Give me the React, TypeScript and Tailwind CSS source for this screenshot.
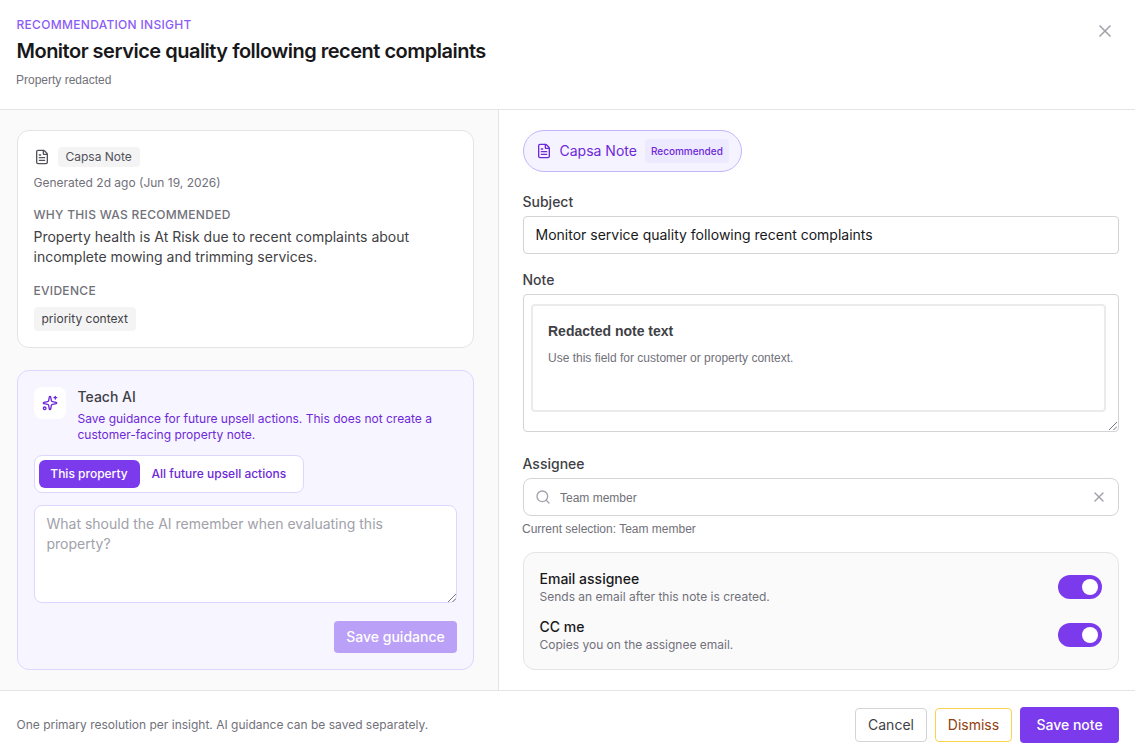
import { FileText, Search, Sparkles, X } from "lucide-react";

const ARIAL = "font-['Liberation_Sans',Arial,sans-serif]";

function FieldLabel({ htmlFor, children }: { htmlFor: string; children: string }) {
  return (
    <label htmlFor={htmlFor} className="block h-5 text-sm leading-5 font-medium text-[#3f3f46]">
      {children}
    </label>
  );
}

function ResizeGrip() {
  return (
    <svg className="absolute right-px bottom-px size-2" viewBox="0 0 8 8" fill="none" stroke="#66666c" strokeWidth="0.9">
      <path d="M0 8 8 0M4.5 8 8 4.5" />
    </svg>
  );
}

function ToggleRow({ title, hint }: { title: string; hint: string }) {
  return (
    <div className="flex h-9 items-center justify-between">
      <div>
        <p className="text-sm leading-5 font-medium text-[#18181b]">{title}</p>
        <p className="text-xs leading-4 text-[#71717a]">{hint}</p>
      </div>
      <button
        role="switch"
        aria-checked="true"
        aria-label={title}
        className="flex h-6 w-11 items-center justify-end rounded-full bg-[#7c3aed] p-1"
      >
        <span className="size-4 rounded-full bg-white" />
      </button>
    </div>
  );
}

function Header() {
  return (
    <header className="flex h-[110px] shrink-0 justify-between border-b border-[#e4e4e7] pt-[17px] pr-[21px] pl-[16.5px]">
      <div>
        <p className="text-xs leading-4 font-medium tracking-[0.3px] text-[#8b5cf6]">RECOMMENDATION INSIGHT</p>
        <h1 className="mt-1 text-xl leading-7 font-semibold tracking-tight text-[#18181b]">
          Monitor service quality following recent complaints
        </h1>
        <p className={`mt-[7px] -ml-[0.5px] text-xs leading-4 text-[#71717a] ${ARIAL}`}>Property redacted</p>
      </div>
      <button aria-label="Close" className="mt-[5px] flex size-[18px] items-center justify-center text-[#a1a1aa]">
        <X className="size-5 shrink-0" strokeWidth={2} />
      </button>
    </header>
  );
}

function RecommendationCard() {
  return (
    <section className="h-[218px] rounded-xl border border-[#e4e4e7] bg-white p-4 text-[#3f3f46]">
      <div className="flex h-5 items-center gap-2">
        <FileText className="size-4 text-[#52525b]" strokeWidth={2} />
        <span className="rounded bg-[#f4f4f5] px-2 text-xs leading-5 text-[#52525b]">Capsa Note</span>
      </div>
      <p className="mt-2 text-xs leading-4 text-[#71717a]">Generated 2d ago (Jun 19, 2026)</p>
      <h2 className="mt-4 text-xs leading-4 font-medium tracking-[0.3px] text-[#71717a]">WHY THIS WAS RECOMMENDED</h2>
      <p className="mt-1 text-sm leading-5">
        Property health is At Risk due to recent complaints about incomplete mowing and trimming services.
      </p>
      <h2 className="mt-4 text-xs leading-4 font-medium tracking-[0.3px] text-[#71717a]">EVIDENCE</h2>
      <span className="mt-2 inline-block rounded bg-[#f4f4f5] px-2 text-xs leading-6">priority context</span>
    </section>
  );
}

function TeachCard() {
  return (
    <section className="mt-[22px] h-[300px] rounded-xl border border-[#ddd6fe] bg-[#f7f5ff] p-4">
      <div className="flex gap-3">
        <div className="flex size-8 shrink-0 items-center justify-center rounded-lg bg-white text-[#6d28d9]">
          <Sparkles className="size-4" strokeWidth={2} />
        </div>
        <div>
          <h2 className="text-sm leading-5 font-medium text-[#3f3f46]">Teach AI</h2>
          <p className="mt-1 text-xs leading-4 text-[#6d28d9]">
            Save guidance for future upsell actions. This does not create a customer-facing property note.
          </p>
        </div>
      </div>
      <div className="mt-3 flex h-[38px] w-[270px] rounded-lg border border-[#ddd6fe] bg-white p-1 text-xs font-medium">
        <button className="h-7 w-[101px] shrink-0 rounded-md bg-[#7c3aed] text-white">This property</button>
        <button className="h-7 shrink-0 pl-3 whitespace-nowrap text-[#6d28d9]">All future upsell actions</button>
      </div>
      <div className="relative mt-3 h-[98px]">
        <textarea
          aria-label="Guidance"
          className="block h-full w-full resize-none rounded-lg border border-[#ddd6fe] bg-white px-3 py-2 text-sm leading-5 placeholder:text-[#a1a1aa]"
          placeholder="What should the AI remember when evaluating this property?"
        />
        <ResizeGrip />
      </div>
      <div className="mt-[18px] flex justify-end">
        <button className="h-8 w-[123px] rounded bg-[#bba0f7] pl-px text-sm font-medium text-white">Save guidance</button>
      </div>
    </section>
  );
}

function NoteForm() {
  return (
    <main className="flex-1 bg-white pt-5 pr-4 pl-[23.5px]">
      <div className="flex h-[42px] w-[219px] items-center rounded-full border border-[#c4b5fd] bg-[#f5f3ff] pl-3 text-[#6d28d9]">
        <FileText className="size-4" strokeWidth={2} />
        <span className="ml-2 text-sm">Capsa Note</span>
        <span className="ml-2 h-6 w-[84px] rounded bg-[#ede9fe] text-center text-[10px] leading-6 font-medium">
          Recommended
        </span>
      </div>

      <div className="mt-5">
        <FieldLabel htmlFor="subject">Subject</FieldLabel>
        <input
          id="subject"
          className="mt-1 block h-[38px] w-full rounded border border-[#d4d4d8] px-3 pb-0.5 text-sm text-[#18181b]"
          defaultValue="Monitor service quality following recent complaints"
        />
      </div>

      <div className="mt-4">
        <FieldLabel htmlFor="note">Note</FieldLabel>
        <div id="note" className="relative mt-1 h-[138px] rounded border border-[#d4d4d8] pt-[9px] pr-3 pl-[7.5px]">
          <div className={`h-[108px] rounded border-2 border-[#ebebec] px-[15px] pt-[17px] ${ARIAL}`}>
            <p className="text-sm leading-4 font-bold text-[#3f3f46]">Redacted note text</p>
            <p className="mt-[11px] text-xs leading-4 text-[#71717a]">
              Use this field for customer or property context.
            </p>
          </div>
          <ResizeGrip />
        </div>
      </div>

      <div className="mt-[22px]">
        <FieldLabel htmlFor="assignee">Assignee</FieldLabel>
        <div className="mt-1 flex h-[38px] items-center rounded-lg border border-[#d4d4d8] pr-[13px] pl-[11.5px] text-[#a1a1aa]">
          <Search className="size-4" strokeWidth={2} />
          <span id="assignee" className={`ml-[9px] flex-1 pt-0.5 text-xs text-[#71717a] ${ARIAL}`}>
            Team member
          </span>
          <X className="-mr-0.5 size-4" strokeWidth={2} />
        </div>
        <p className={`mt-[5px] -ml-[0.5px] text-xs leading-4 text-[#71717a] ${ARIAL}`}>
          Current selection: Team member
        </p>
      </div>

      <div className="mt-[15px] flex h-[118px] flex-col gap-3 rounded-xl border border-[#e4e4e7] bg-[#fafafa] p-4">
        <ToggleRow title="Email assignee" hint="Sends an email after this note is created." />
        <ToggleRow title="CC me" hint="Copies you on the assignee email." />
      </div>
    </main>
  );
}

function Footer() {
  return (
    <footer className="flex h-[65px] shrink-0 items-center justify-between border-t border-[#e4e4e7] pt-1 pr-4 pl-[16.5px]">
      <p className="text-xs leading-4 text-[#71717a]">
        One primary resolution per insight. AI guidance can be saved separately.
      </p>
      <div className="flex items-center gap-2 text-sm">
        <button className="h-[34px] w-[72px] rounded border border-[#d4d4d8] text-[#3f3f46]">Cancel</button>
        <button className="h-[34px] w-[77px] rounded border border-[#fcd34d] text-[#92400e]">Dismiss</button>
        <button className="h-9 w-[99px] rounded bg-[#7c3aed] font-medium text-white">Save note</button>
      </div>
    </footer>
  );
}

export default function App() {
  return (
    <div className="flex h-[755px] w-[1135px] flex-col overflow-hidden bg-white font-['Inter',sans-serif] antialiased">
      <Header />
      <div className="flex h-[580px] shrink-0">
        <aside className="w-[499px] shrink-0 border-r border-[#e4e4e7] bg-[#fafafa] pt-5 pr-[24.5px] pl-[16.5px]">
          <RecommendationCard />
          <TeachCard />
        </aside>
        <NoteForm />
      </div>
      <Footer />
    </div>
  );
}
